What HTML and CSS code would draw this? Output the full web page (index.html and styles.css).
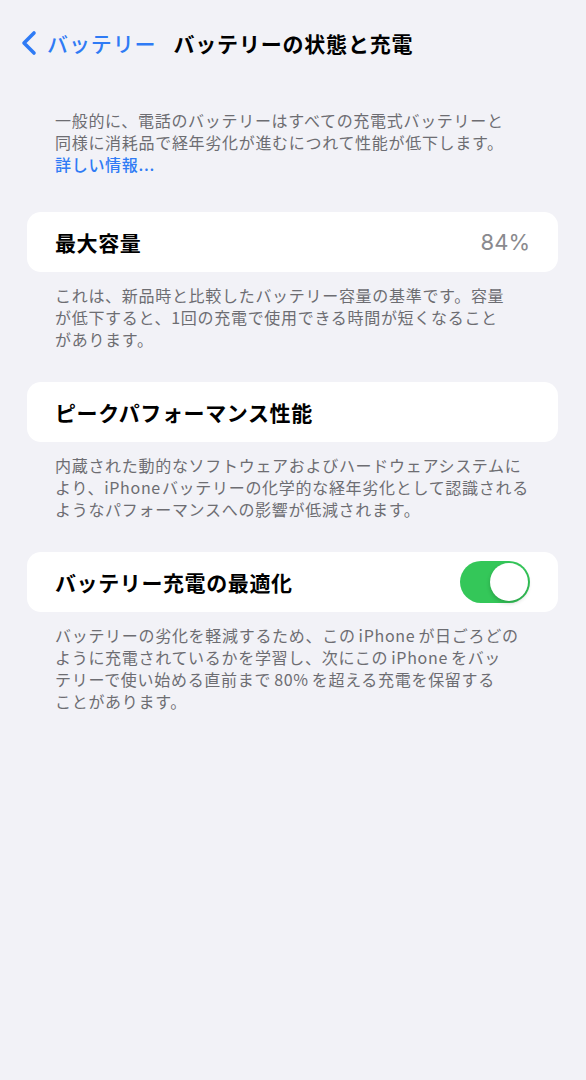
FILE: index.html
```html
<!DOCTYPE html>
<html lang="ja">
<head>
<meta charset="utf-8">
<link rel="stylesheet" href="styles.css">
</head>
<body>
<div class="page">
  <header class="nav">
    <span class="back">
      <svg class="chev" width="18" height="26" viewBox="0 0 18 26"><path d="M14 3 L4 13 L14 23" fill="none" stroke="#2f7bf5" stroke-width="3.6" stroke-linecap="round" stroke-linejoin="round"/></svg>
      <span class="back-text">バッテリー</span>
    </span>
    <h1 class="title">バッテリーの状態と充電</h1>
  </header>

  <p class="intro">一般的に、電話のバッテリーはすべての充電式バッテリーと<br>同様に消耗品で経年劣化が進むにつれて性能が低下します。<br><span class="link">詳しい情報...</span></p>

  <div class="card">
    <span class="label">最大容量</span>
    <span class="value">84%</span>
  </div>
  <p class="foot">これは、新品時と比較したバッテリー容量の基準です。容量<br>が低下すると、1回の充電で使用できる時間が短くなること<br>があります。</p>

  <div class="card">
    <span class="label">ピークパフォーマンス性能</span>
  </div>
  <p class="foot">内蔵された動的なソフトウェアおよびハードウェアシステムに<br>より、<span class="latin tight">iPhone</span>バッテリーの化学的な経年劣化として認識される<br>ようなパフォーマンスへの影響が低減されます。</p>

  <div class="card">
    <span class="label">バッテリー充電の最適化</span>
    <span class="toggle"><span class="knob"></span></span>
  </div>
  <p class="foot">バッテリーの劣化を軽減するため、この<span class="latin">iPhone</span>が日ごろどの<br>ように充電されているかを学習し、次にこの<span class="latin">iPhone</span>をバッ<br>テリーで使い始める直前まで<span class="latin">80%</span>を超える充電を保留する<br>ことがあります。</p>
</div>
</body>
</html>
```

FILE: styles.css
```css
html, body {
  margin: 0;
  padding: 0;
  background: #f2f2f7;
}
body {
  font-family: "Noto Sans CJK JP", "Noto Sans", sans-serif;
  color: #000;
  width: 586px;
  height: 1080px;
}
.page {
  padding: 0 28px 0 27px;
}
.nav {
  display: flex;
  align-items: flex-start;
  height: 88px;
  margin-left: -7px;
  box-sizing: border-box;
  padding-top: 28px;
}
.back {
  display: flex;
  align-items: center;
  color: #2f7bf5;
}
.chev {
  margin-right: 9px;
}
.back-text {
  font-size: 21px;
  font-weight: 500;
  letter-spacing: 0.9px;
}
.title {
  margin: 0 0 0 17px;
  font-size: 21px;
  font-weight: 700;
  line-height: 30px;
  letter-spacing: 0.8px;
}
.intro, .foot {
  margin: 0;
  padding: 0 0 0 28px;
  font-size: 16px;
  line-height: 22px;
  color: #6d6d72;
  letter-spacing: 0.7px;
  white-space: nowrap;
}
.latin {
  margin: 0 3px;
}
.latin.tight {
  margin: 0 1px 0 0;
}
.intro {
  margin-top: 21px;
  margin-bottom: 37px;
}
.link {
  color: #2f7bf5;
  font-weight: 500;
}
.card {
  background: #fff;
  border-radius: 14px;
  height: 60px;
  display: flex;
  align-items: center;
  justify-content: space-between;
  padding: 0 28px;
}
.label {
  font-size: 21px;
  font-weight: 600;
  letter-spacing: 0.6px;
}
.value {
  font-family: "Inter", "Noto Sans", sans-serif;
  font-size: 22px;
  color: #8a8a8e;
}
.foot {
  margin-top: 12px;
  margin-bottom: 32px;
}
.toggle {
  width: 70px;
  height: 42px;
  border-radius: 21px;
  background: #34c759;
  display: flex;
  align-items: center;
  justify-content: flex-end;
  padding: 2px;
  box-sizing: border-box;
}
.knob {
  width: 38px;
  height: 38px;
  border-radius: 50%;
  background: #fff;
  box-shadow: 0 2px 4px rgba(0,0,0,0.2);
}
```
